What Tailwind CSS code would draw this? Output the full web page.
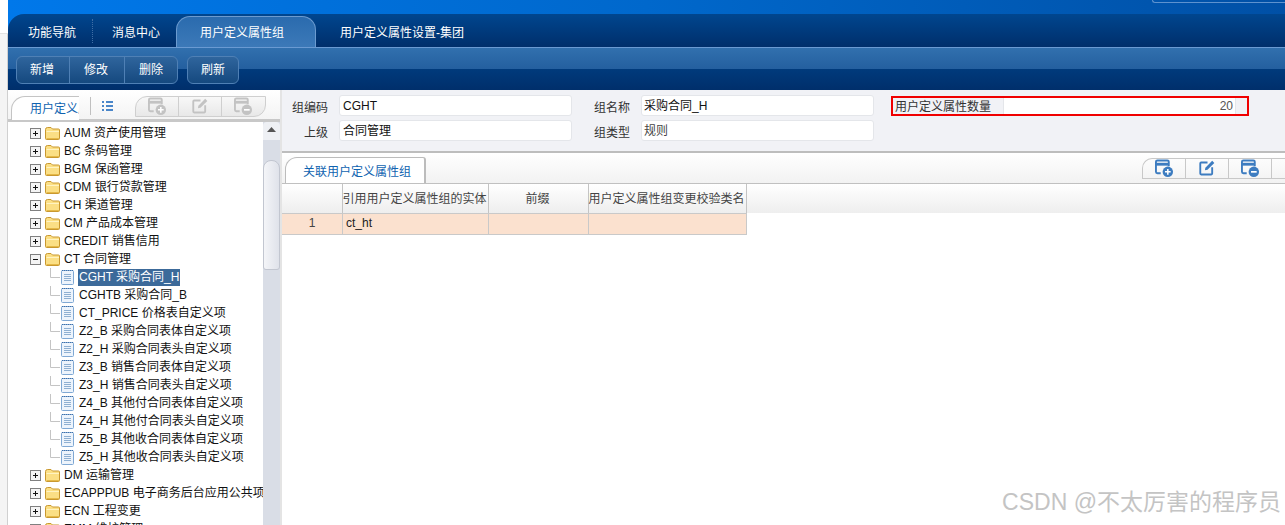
<!DOCTYPE html>
<html lang="zh">
<head>
<meta charset="utf-8">
<script src="https://cdn.jsdelivr.net/npm/@tailwindcss/browser@4"></script>
</head>
<body class="m-0 bg-white">
<svg width="0" height="0" class="absolute">
  <defs>
    <symbol id="plus" viewBox="0 0 11 11"><rect x="0.5" y="0.5" width="10" height="10" fill="#f4f4f4" stroke="#808080"/><path d="M3 5.5H8M5.5 3V8" stroke="#111" fill="none"/></symbol>
    <symbol id="minus" viewBox="0 0 11 11"><rect x="0.5" y="0.5" width="10" height="10" fill="#f4f4f4" stroke="#808080"/><path d="M3 5.5H8" stroke="#111" fill="none"/></symbol>
    <symbol id="folder" viewBox="0 0 16 14"><path d="M0.5 3.5Q0.5 1.5 2.5 1.5H6L7.5 3H13.5Q14.5 3 14.5 4V12.5Q14.5 13.5 13.5 13.5H1.5Q0.5 13.5 0.5 12.5Z" fill="#fbdf85" stroke="#c9982f"/><path d="M1.5 5.5H14" stroke="#fff3c2" fill="none"/><path d="M1.5 12.5H14" stroke="#e5b948" fill="none"/></symbol>
    <symbol id="doc" viewBox="0 0 13 16"><rect x="0.5" y="1.5" width="12" height="14" rx="1" fill="#edf4fc" stroke="#7fa8d4"/><path d="M1 1.5H12" stroke="#3f6fa8" stroke-dasharray="1 1" fill="none"/><path d="M3 5.5H10M3 7.5H10M3 9.5H10M3 11.5H10" stroke="#8fb0d2" fill="none"/></symbol>
    <symbol id="add" viewBox="0 0 20 20"><path d="M6 15H2.5Q1 15 1 13.5V3Q1 1.500 2.500 1.500H13Q14.500 1.500 14.500 3V7.500" fill="none" stroke="currentColor" stroke-width="2"/><path d="M1 5.500H14.500" stroke="currentColor" stroke-width="3" fill="none"/><circle cx="13.500" cy="13.500" r="5.500" fill="currentColor"/><path d="M10.500 13.500H16.500M13.500 10.500V16.500" stroke="#fff" stroke-width="1.600" fill="none"/></symbol>
    <symbol id="edit" viewBox="0 0 20 20"><path d="M10 3H2.500Q1.500 3 1.500 4V16Q1.500 17 2.500 17H14.500Q15.500 17 15.500 16V8.500" fill="none" stroke="currentColor" stroke-width="2.200"/><path d="M7 12L7.500 9L15.500 1L18 3.500L10 11.500Z" fill="currentColor"/></symbol>
    <symbol id="del" viewBox="0 0 20 20"><path d="M6 15H2.500Q1 15 1 13.500V3Q1 1.500 2.500 1.500H13Q14.500 1.500 14.500 3V7.500" fill="none" stroke="currentColor" stroke-width="2"/><path d="M1 5.500H14.500" stroke="currentColor" stroke-width="3" fill="none"/><circle cx="13.500" cy="13.500" r="5.500" fill="currentColor"/><path d="M10.500 13.500H16.500" stroke="#fff" stroke-width="1.800" fill="none"/></symbol>
  </defs>
</svg>

<div class="relative flex h-[525px] w-[1285px] overflow-hidden text-xs leading-none text-[#222] font-['Liberation_Sans','Noto_Sans_CJK_SC',sans-serif]">
  <!-- left strip -->
  <div class="flex w-2 shrink-0 flex-col bg-[#f4f4f4]">
    <div class="h-[34px] border-b border-[#e2e2e2] bg-white"></div>
    <div class="flex-1 border-r border-[#d0d0d0]"></div>
  </div>

  <div class="flex min-w-0 flex-1 flex-col">
    <!-- header -->
    <div class="relative h-[90px] shrink-0 bg-gradient-to-r from-[#0078ea] via-[#0068cc] to-[#0050a6]">
      <div class="absolute right-0 top-0 h-[3px] w-[133px] rounded-bl-md border-b border-l border-[#5d92cf]"></div>
      <div class="h-[14px]"></div>
      <!-- tabs -->
      <div class="flex h-[33px] items-end rounded-tl-[16px] bg-gradient-to-b from-[#00468f] to-[#002f6b] pl-5 text-white">
        <div class="flex h-[33px] w-[64px] items-center pt-[5px]">功能导航</div>
        <div class="h-6 w-0 self-center border-l border-dotted border-[#3f6ea5]"></div>
        <div class="flex h-[33px] w-[83px] items-center pl-[19px] pt-[5px]">消息中心</div>
        <div class="flex h-[31px] w-[140px] items-center justify-start rounded-t-[14px] border-x border-t border-[#6b9bd0] bg-gradient-to-b from-[#2a6bae] to-[#3c79b8] pl-[23px] pt-[2px]">用户定义属性组</div>
        <div class="flex h-[33px] items-center pl-6 pt-[5px]">用户定义属性设置-集团</div>
      </div>
      <!-- toolbar -->
      <div class="h-[43px] border-t border-[#6a9ad2] bg-[linear-gradient(to_bottom,#3170ae_0,#245f9f_21px,#003a7c_21px,#002f6b_100%)] px-2 pt-2 text-white">
        <div class="flex h-[28px] gap-[9px]">
          <div class="flex h-[28px] w-[162px] rounded-md border border-[#4f80b5] bg-gradient-to-b from-[#2f659d] to-[#15497f]">
            <div class="flex w-[53px] items-center justify-center border-r border-[#4f80b5] pr-[2px]">新增</div>
            <div class="flex w-[55px] items-center justify-center border-r border-[#4f80b5] pr-[2px]">修改</div>
            <div class="flex flex-1 items-center justify-center">删除</div>
          </div>
          <div class="flex h-[28px] w-[52px] items-center justify-center rounded-md border border-[#4f80b5] bg-gradient-to-b from-[#2f659d] to-[#15497f]">刷新</div>
        </div>
      </div>
    </div>

    <!-- body -->
    <div class="flex min-h-0 flex-1">
      <!-- left panel -->
      <div class="flex w-[274px] shrink-0 flex-col border-r-2 border-[#e4e4e4] bg-white">
        <div class="flex h-[32px] shrink-0 items-start border-b-[3px] border-[#c8c8c8] bg-gradient-to-b from-white to-[#f4f4f4] pt-[6px]">
          <div class="relative ml-[3px] flex h-[24px] w-[68px] items-center overflow-hidden rounded-tl-[14px] border-l border-t border-[#c4c4c4] bg-white pl-[18px] text-[#0f63b0]"><span class="whitespace-nowrap">用户定义属性</span></div>
          <div class="ml-[11px] mt-[1px] h-[18px] w-0 border-l border-[#c0c0c0]"></div>
          <svg class="ml-[11px] mt-[5px]" width="11" height="10" viewBox="0 0 11 10"><path d="M0 1H2M4 1H11M0 5H2M4 5H11M0 9H2M4 9H11" stroke="#4a86c9" stroke-width="2" fill="none"/></svg>
          <div class="ml-[22px] flex h-[21px] w-[131px] rounded-bl-none rounded-tl-[12px] rounded-br-[12px] border border-[#cfcfcf] bg-gradient-to-b from-[#f8f8f8] to-[#e8e8e8] text-[#c3c3c3]">
            <div class="flex w-[43px] items-center justify-center border-r border-[#cfcfcf]"><svg width="19" height="19"><use href="#add"/></svg></div>
            <div class="flex w-[43px] items-center justify-center border-r border-[#cfcfcf]"><svg width="17" height="17"><use href="#edit"/></svg></div>
            <div class="flex flex-1 items-center justify-center"><svg width="19" height="19"><use href="#del"/></svg></div>
          </div>
        </div>
        <div class="flex min-h-0 flex-1">
          <!-- tree -->
          <div class="w-[255px] shrink-0 overflow-hidden whitespace-nowrap pt-[2px] text-[#111]">
            <div class="flex h-[18px] items-center pl-[22px]"><svg width="11" height="11"><use href="#plus"/></svg><svg class="ml-[4px]" width="16" height="14"><use href="#folder"/></svg><span class="ml-[3px]">AUM 资产使用管理</span></div>
            <div class="flex h-[18px] items-center pl-[22px]"><svg width="11" height="11"><use href="#plus"/></svg><svg class="ml-[4px]" width="16" height="14"><use href="#folder"/></svg><span class="ml-[3px]">BC 条码管理</span></div>
            <div class="flex h-[18px] items-center pl-[22px]"><svg width="11" height="11"><use href="#plus"/></svg><svg class="ml-[4px]" width="16" height="14"><use href="#folder"/></svg><span class="ml-[3px]">BGM 保函管理</span></div>
            <div class="flex h-[18px] items-center pl-[22px]"><svg width="11" height="11"><use href="#plus"/></svg><svg class="ml-[4px]" width="16" height="14"><use href="#folder"/></svg><span class="ml-[3px]">CDM 银行贷款管理</span></div>
            <div class="flex h-[18px] items-center pl-[22px]"><svg width="11" height="11"><use href="#plus"/></svg><svg class="ml-[4px]" width="16" height="14"><use href="#folder"/></svg><span class="ml-[3px]">CH 渠道管理</span></div>
            <div class="flex h-[18px] items-center pl-[22px]"><svg width="11" height="11"><use href="#plus"/></svg><svg class="ml-[4px]" width="16" height="14"><use href="#folder"/></svg><span class="ml-[3px]">CM 产品成本管理</span></div>
            <div class="flex h-[18px] items-center pl-[22px]"><svg width="11" height="11"><use href="#plus"/></svg><svg class="ml-[4px]" width="16" height="14"><use href="#folder"/></svg><span class="ml-[3px]">CREDIT 销售信用</span></div>
            <div class="flex h-[18px] items-center pl-[22px]"><svg width="11" height="11"><use href="#minus"/></svg><svg class="ml-[4px]" width="16" height="14"><use href="#folder"/></svg><span class="ml-[3px]">CT 合同管理</span></div>

            <div class="flex h-[18px] items-center pl-[42px]"><svg width="11" height="18"><path d="M0.500 0V9.500H10" stroke="#c4c4c4" fill="none"/></svg><svg width="13" height="16"><use href="#doc"/></svg><span class="ml-[4px] flex h-[17px] items-center bg-[#3c6a9a] px-[1px] text-white">CGHT 采购合同_H</span></div>
            <div class="flex h-[18px] items-center pl-[42px]"><svg width="11" height="18"><path d="M0.500 0V9.500H10" stroke="#c4c4c4" fill="none"/></svg><svg width="13" height="16"><use href="#doc"/></svg><span class="ml-[5px]">CGHTB 采购合同_B</span></div>
            <div class="flex h-[18px] items-center pl-[42px]"><svg width="11" height="18"><path d="M0.500 0V9.500H10" stroke="#c4c4c4" fill="none"/></svg><svg width="13" height="16"><use href="#doc"/></svg><span class="ml-[5px]">CT_PRICE 价格表自定义项</span></div>
            <div class="flex h-[18px] items-center pl-[42px]"><svg width="11" height="18"><path d="M0.500 0V9.500H10" stroke="#c4c4c4" fill="none"/></svg><svg width="13" height="16"><use href="#doc"/></svg><span class="ml-[5px]">Z2_B 采购合同表体自定义项</span></div>
            <div class="flex h-[18px] items-center pl-[42px]"><svg width="11" height="18"><path d="M0.500 0V9.500H10" stroke="#c4c4c4" fill="none"/></svg><svg width="13" height="16"><use href="#doc"/></svg><span class="ml-[5px]">Z2_H 采购合同表头自定义项</span></div>
            <div class="flex h-[18px] items-center pl-[42px]"><svg width="11" height="18"><path d="M0.500 0V9.500H10" stroke="#c4c4c4" fill="none"/></svg><svg width="13" height="16"><use href="#doc"/></svg><span class="ml-[5px]">Z3_B 销售合同表体自定义项</span></div>
            <div class="flex h-[18px] items-center pl-[42px]"><svg width="11" height="18"><path d="M0.500 0V9.500H10" stroke="#c4c4c4" fill="none"/></svg><svg width="13" height="16"><use href="#doc"/></svg><span class="ml-[5px]">Z3_H 销售合同表头自定义项</span></div>
            <div class="flex h-[18px] items-center pl-[42px]"><svg width="11" height="18"><path d="M0.500 0V9.500H10" stroke="#c4c4c4" fill="none"/></svg><svg width="13" height="16"><use href="#doc"/></svg><span class="ml-[5px]">Z4_B 其他付合同表体自定义项</span></div>
            <div class="flex h-[18px] items-center pl-[42px]"><svg width="11" height="18"><path d="M0.500 0V9.500H10" stroke="#c4c4c4" fill="none"/></svg><svg width="13" height="16"><use href="#doc"/></svg><span class="ml-[5px]">Z4_H 其他付合同表头自定义项</span></div>
            <div class="flex h-[18px] items-center pl-[42px]"><svg width="11" height="18"><path d="M0.500 0V9.500H10" stroke="#c4c4c4" fill="none"/></svg><svg width="13" height="16"><use href="#doc"/></svg><span class="ml-[5px]">Z5_B 其他收合同表体自定义项</span></div>
            <div class="flex h-[18px] items-center pl-[42px]"><svg width="11" height="18"><path d="M0.500 0V9.500H10" stroke="#c4c4c4" fill="none"/></svg><svg width="13" height="16"><use href="#doc"/></svg><span class="ml-[5px]">Z5_H 其他收合同表头自定义项</span></div>

            <div class="flex h-[18px] items-center pl-[22px]"><svg width="11" height="11"><use href="#plus"/></svg><svg class="ml-[4px]" width="16" height="14"><use href="#folder"/></svg><span class="ml-[3px]">DM 运输管理</span></div>
            <div class="flex h-[18px] w-max items-center pl-[22px]"><svg width="11" height="11"><use href="#plus"/></svg><svg class="ml-[4px]" width="16" height="14"><use href="#folder"/></svg><span class="ml-[3px]">ECAPPPUB 电子商务后台应用公共项</span></div>
            <div class="flex h-[18px] items-center pl-[22px]"><svg width="11" height="11"><use href="#plus"/></svg><svg class="ml-[4px]" width="16" height="14"><use href="#folder"/></svg><span class="ml-[3px]">ECN 工程变更</span></div>
            <div class="flex h-[18px] items-center pl-[22px]"><svg width="11" height="11"><use href="#plus"/></svg><svg class="ml-[4px]" width="16" height="14"><use href="#folder"/></svg><span class="ml-[3px]">EMM 维护管理</span></div>
          </div>
          <!-- scrollbar -->
          <div class="flex w-[17px] shrink-0 flex-col bg-[#d9dde6]">
            <div class="relative h-[18px] rounded-t-sm bg-[#eef0f4]">
              <svg class="mx-auto mt-[5px]" width="9" height="5"><path d="M4.500 0L9 5H0Z" fill="#555"/></svg>
            </div>
            <div class="h-[20px]"></div>
            <div class="h-[110px] rounded-t-[8px] rounded-b-[3px] border border-[#c2c6d0] bg-gradient-to-r from-[#f4f5f8] to-[#dfe2ea]"></div>
          </div>
        </div>
      </div>

      <!-- right panel -->
      <div class="flex min-w-0 flex-1 flex-col">
        <!-- form -->
        <div class="h-[63px] shrink-0 border-b-2 border-[#bdbdbd] bg-[#f1f2f6] pl-[10px] pt-[5px] text-[#333]">
          <div class="flex h-[21px] items-center">
            <div class="w-[36px] pt-1 text-right">组编码</div>
            <div class="ml-[11px] flex h-[21px] w-[233px] items-center rounded-[3px] border border-[#e4e6ea] bg-white pl-[3px] text-[#111]">CGHT</div>
            <div class="ml-[20px] w-[38px] pt-1 text-right">组名称</div>
            <div class="ml-[11px] flex h-[21px] w-[233px] items-center rounded-[3px] border border-[#e4e6ea] bg-white pl-[2px] pt-px text-[#111]">采购合同_H</div>
            <div class="ml-[17px] flex h-[20px] w-[358px] items-center border-2 border-[#f00000] pl-[2px]">
              <div class="w-[108px] pt-[2px]">用户定义属性数量</div>
              <div class="flex h-full w-[233px] items-center justify-end border-x border-[#e4e6ea] bg-white pr-[2px] text-[#555]">20</div>
            </div>
          </div>
          <div class="mt-1 flex h-[21px] items-center">
            <div class="w-[36px] pt-1 text-right">上级</div>
            <div class="ml-[11px] flex h-[21px] w-[233px] items-center rounded-[3px] border border-[#e4e6ea] bg-white pl-[3px] pt-px text-[#111]">合同管理</div>
            <div class="ml-[20px] w-[38px] pt-1 text-right">组类型</div>
            <div class="ml-[11px] flex h-[21px] w-[233px] items-center rounded-[3px] border border-[#e4e6ea] bg-white pl-[2px] pt-px text-[#444]">规则</div>
          </div>
        </div>
        <!-- tab strip -->
        <div class="flex h-[31px] shrink-0 items-end justify-between border-b border-[#c0c0c0] bg-gradient-to-b from-white to-[#f2f2f2] pl-[3px]">
          <div class="flex h-[26px] w-[141px] items-center rounded-tl-[12px] rounded-tr-[3px] border-r-2 border-t border-l border-[#bcbcbc] bg-white pl-[17px] pt-[2px] text-[#0f63b0]">关联用户定义属性组</div>
          <div class="mb-[4px] flex h-[21px] w-[143px] rounded-tl-[10px] border-b border-l border-t border-[#c8c8c8] text-[#3d7cc0]">
            <div class="flex w-[43px] items-center justify-center border-r border-[#c8c8c8]"><svg width="19" height="19"><use href="#add"/></svg></div>
            <div class="flex w-[43px] items-center justify-center border-r border-[#c8c8c8]"><svg width="17" height="17"><use href="#edit"/></svg></div>
            <div class="flex w-[43px] items-center justify-center border-r border-[#c8c8c8]"><svg width="19" height="19"><use href="#del"/></svg></div>
          </div>
        </div>
        <!-- grid -->
        <div class="flex h-[29px] shrink-0 bg-gradient-to-b from-white to-[#eeeeee] text-[#444]">
          <div class="w-[61px] border-r border-[#c4c4c4]"></div>
          <div class="flex w-[146px] items-center justify-center whitespace-nowrap border-r border-[#c4c4c4] pr-[2px]">引用用户定义属性组的实体</div>
          <div class="flex w-[100px] items-center justify-center border-r border-[#c4c4c4] pr-[2px]">前缀</div>
          <div class="flex w-[158px] items-center justify-center whitespace-nowrap border-r border-[#c4c4c4] pr-[2px]">用户定义属性组变更校验类名</div>
        </div>
        <div class="flex h-[22px] w-[465px] shrink-0 border-b border-t border-[#c9c9c9] bg-[#fbe1cf] text-[#222]">
          <div class="flex w-[61px] items-center justify-center border-r border-[#c9c9c9] pb-[2px] text-[#444]">1</div>
          <div class="flex w-[146px] items-center border-r border-[#c9c9c9] pb-[2px] pl-[3px]">ct_ht</div>
          <div class="w-[100px] border-r border-[#c9c9c9]"></div>
          <div class="flex-1 border-r border-[#c9c9c9]"></div>
        </div>
      </div>
    </div>
  </div>

  <!-- watermark -->
  <div class="absolute right-[4px] top-[490px] text-[23px] leading-6 whitespace-nowrap text-[#c4c4c4]">CSDN @不太厉害的程序员</div>
</div>
</body>
</html>
